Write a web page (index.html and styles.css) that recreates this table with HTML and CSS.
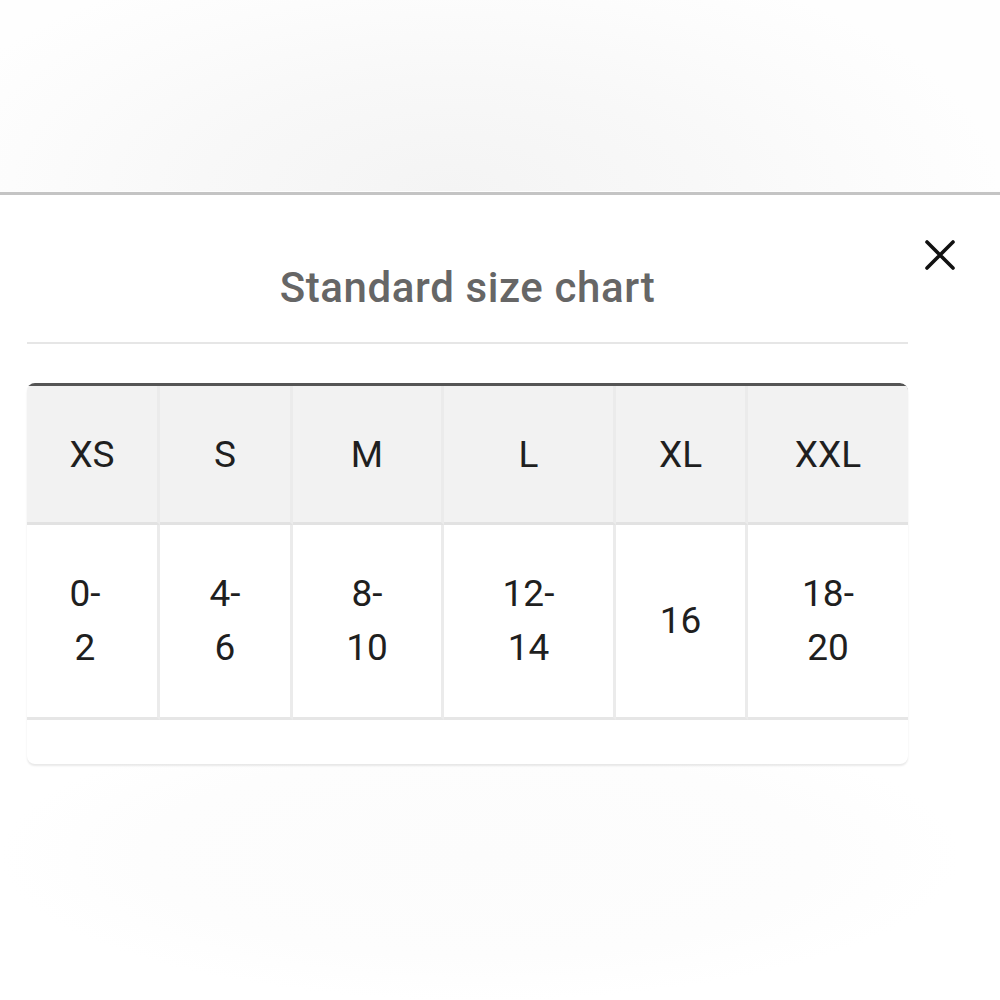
FILE: index.html
```html
<!DOCTYPE html>
<html lang="en">
<head>
    <meta charset="UTF-8">
    <meta name="viewport" content="width=device-width, initial-scale=1.0">
    <title>Standard size chart</title>
    <link rel="stylesheet" href="styles.css">
</head>
<body>
    <div class="backdrop"></div>

    <div class="sheet">
        <button class="close" aria-label="Close">
            <svg width="34" height="34" viewBox="0 0 34 34">
                <path d="M4 4 L30 30 M30 4 L4 30" stroke="#111" stroke-width="3.6" stroke-linecap="round" fill="none"/>
            </svg>
        </button>

        <div class="sheet-head">
            <h1>Standard size chart</h1>
        </div>

        <div class="chart">
            <table>
                <colgroup>
                    <col style="width:133px">
                    <col style="width:133px">
                    <col style="width:151px">
                    <col style="width:172px">
                    <col style="width:132px">
                    <col style="width:160px">
                </colgroup>
                <thead>
                    <tr>
                        <th>XS</th>
                        <th>S</th>
                        <th>M</th>
                        <th>L</th>
                        <th>XL</th>
                        <th>XXL</th>
                    </tr>
                </thead>
                <tbody>
                    <tr>
                        <td class="first">0-<br>2</td>
                        <td>4-<br>6</td>
                        <td>8-<br>10</td>
                        <td>12-<br>14</td>
                        <td>16</td>
                        <td>18-<br>20</td>
                    </tr>
                </tbody>
            </table>
        </div>
    </div>
</body>
</html>
```

FILE: styles.css
```css
body {
    font-family: Roboto, "Noto Sans", Arial, sans-serif;
    margin: 0;
    padding: 0;
    height: 1000px;
    background-color: white;
    color: #1f1f1f;
    overflow: hidden;
}
.backdrop {
    height: 191px;
    background: radial-gradient(ellipse 55% 130% at 45% 100%, #f4f4f4 0%, #f8f8f8 45%, #fcfcfc 80%, #fefefe 100%);
    border-bottom: 1px solid #fdfdfd;
}
.sheet {
    position: relative;
    border-top: 3px solid #c4c4c4;
    height: 806px;
    background: radial-gradient(ellipse 48% 18% at 48% 82%, #fcfcfc 0%, #fdfdfd 70%, #ffffff 100%);
}
.close {
    position: absolute;
    top: 43px;
    right: 43px;
    padding: 0;
    border: none;
    background: none;
    cursor: pointer;
    line-height: 0;
}
.sheet-head {
    margin: 0 92px 0 27px;
    padding: 68px 0 29px;
    border-bottom: 2px solid #e6e6e6;
    text-align: center;
}
.sheet-head h1 {
    margin: 0;
    font-size: 42px;
    line-height: 50px;
    letter-spacing: 0.6px;
    font-weight: 500;
    color: #666;
}
.chart {
    margin: 39px 92px 0 27px;
    padding-bottom: 44px;
    background-color: white;
    border-radius: 8px;
    box-shadow: 0 2px 2px rgba(0, 0, 0, 0.09);
    overflow: hidden;
}
.chart table {
    width: 881px;
    table-layout: fixed;
    border-collapse: separate;
    border-spacing: 0;
    border-top: 3px solid #555;
    border-top-right-radius: 8px;
}
.chart th, .chart td {
    font-size: 37px;
    font-weight: 400;
    text-align: center;
    border-right: 3px solid #ebebeb;
    color: #1f1f1f;
}
.chart th:last-child, .chart td:last-child {
    border-right: none;
}
.chart th {
    height: 136px;
    padding: 0;
    background-color: #f2f2f2;
    border-bottom: 3px solid #e2e2e2;
}
.chart td {
    height: 192px;
    padding: 0;
    line-height: 54px;
    border-bottom: 3px solid #e6e6e6;
}
.chart td.first {
    padding-right: 14px;
}
```
